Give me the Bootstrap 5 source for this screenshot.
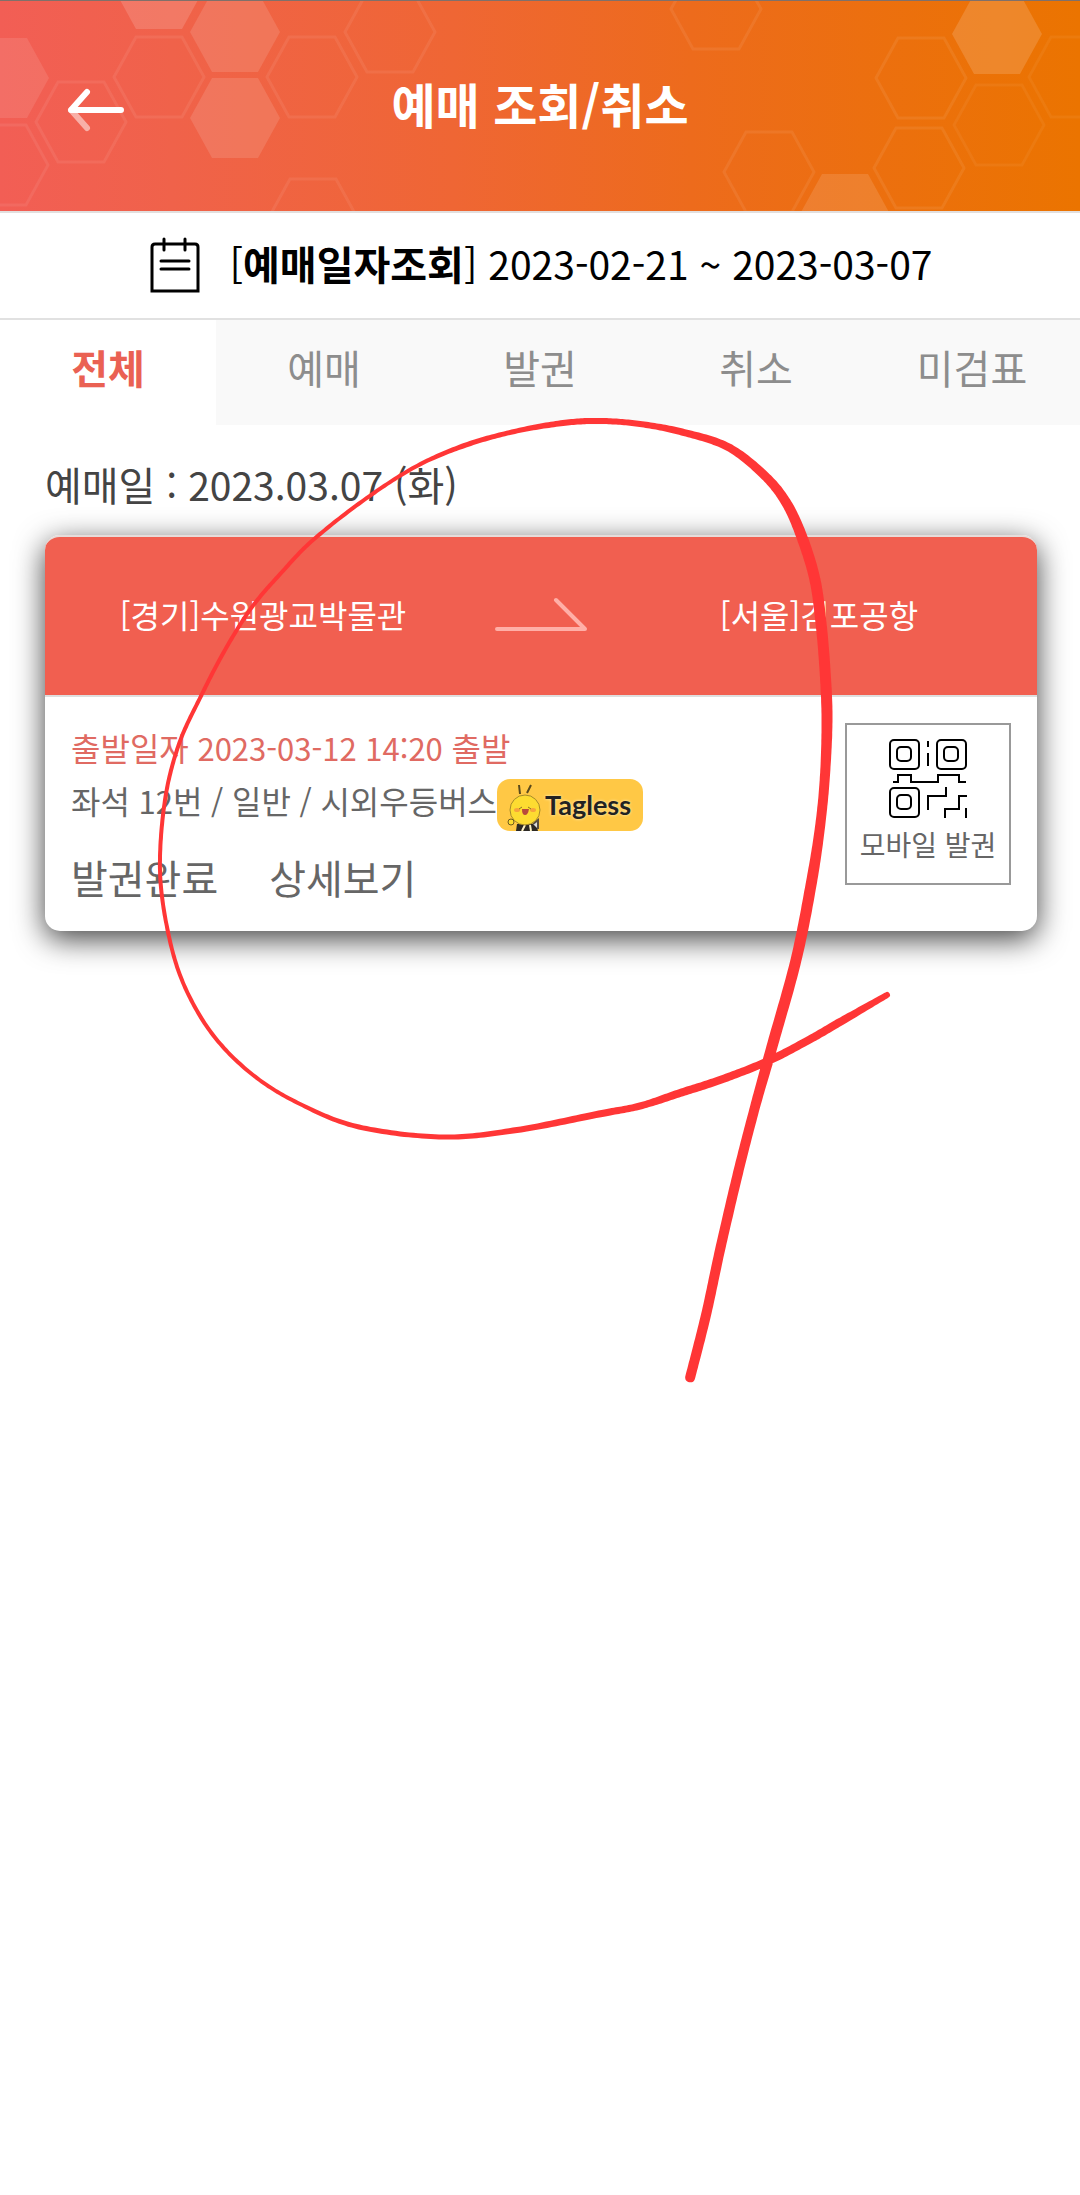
<!DOCTYPE html>
<html lang="ko">
<head>
<meta charset="utf-8">
<meta name="viewport" content="width=device-width, initial-scale=1">
<title>예매 조회/취소</title>
<link href="https://cdn.jsdelivr.net/npm/bootstrap@5.3.0/dist/css/bootstrap.min.css" rel="stylesheet">
<style>
  body { font-family: "Noto Sans CJK KR", "Noto Sans", sans-serif; color: #000; background: #fff; }
  button { color: inherit; font-family: inherit; }
  .app-header { height: 213px; padding-bottom: 6px; border-top: 1px solid #80706a; border-bottom: 2px solid #e2dfde;
    background: linear-gradient(90deg, #f25e55 0, #f0624a 16%, #ef6634 42%, #ed6b1c 64%, #eb7400 100%); }
  .honeycomb { inset: 0; }
  .back-btn { left: 60px; top: 76px; width: 72px; height: 64px; }
  .app-title { font-size: 48px; line-height: 72px; }
  .date-bar { gap: 28px; padding: 19px 0 24px; border-bottom: 2px solid #e1e1e1; font-size: 40px; line-height: 60px; }
  .date-bar svg { margin-top: 4px; }
  .lg-num { font-size: 39px; line-height: 1; }
  .sm-num { font-size: 31px; line-height: 1; }
  .status-tabs { background: #f9f9f9; }
  .status-tabs .nav-link { padding: 17px 0 28px; border-radius: 0; font-size: 40px; line-height: 60px; color: #8d8d8d; }
  .status-tabs .nav-link.active { background: #fff; color: #ea6153; font-weight: 700; }
  .content { padding: 29px 43px 60px 45px; }
  .day-title { margin: 0 0 21px; font-size: 40px; line-height: 60px; color: #444; font-weight: 400; }
  .ticket { border: 0; border-radius: 15px; box-shadow: 0 8px 30px rgba(0, 0, 0, .75); }
  .ticket-route { padding: 53px 0 57px; border-top: 2px solid #e6dcda; border-bottom: 2px solid #dedede;
    border-radius: 15px 15px 0 0; background: #f15f50; color: #fff; font-size: 32px; line-height: 48px; }
  .route-arrow { width: 120px; }
  .ticket-info { padding: 26px 26px 24px; font-size: 32px; line-height: 48px; color: #666; }
  .depart { color: #e06a62; }
  .seat-row { margin-top: 5px; }
  .tagless { width: 146px; height: 52px; margin-top: 3px; border-radius: 13px; background: #ffc845; color: #222;
    font: 700 27px/52px Lato, sans-serif; text-shadow: 0 0 3px #fff3c8; }
  .actions { margin-top: 16px; gap: 51px; font-size: 40px; line-height: 60px; }
  .qr-btn { width: 166px; height: 162px; padding-top: 13px; border: 2px solid #999; font-size: 28px; line-height: 42px; color: #666; }
  .qr-btn svg { margin-bottom: 4px; }
  .pen-layer { top: 0; left: 0; pointer-events: none; z-index: 10; }
</style>
<script src="https://cdn.jsdelivr.net/npm/bootstrap@5.3.0/dist/js/bootstrap.bundle.min.js"></script>
</head>
<body class="position-relative min-vh-100">

<header class="app-header position-relative d-flex align-items-center justify-content-center">
  <svg class="honeycomb position-absolute w-100 h-100" viewBox="0 1 1080 210" preserveAspectRatio="xMidYMid slice" aria-hidden="true">
    <defs><path id="hex" d="M-45 0L-23-40H23L45 0L23 40H-23Z"/></defs>
    <g fill="#fff">
      <use href="#hex" x="4" y="78" fill-opacity=".1"/>
      <use href="#hex" x="159" y="-11" fill-opacity=".15"/>
      <use href="#hex" x="235" y="32" fill-opacity=".12"/>
      <use href="#hex" x="235" y="118" fill-opacity=".12"/>
      <use href="#hex" x="997" y="34" fill-opacity=".15"/>
      <use href="#hex" x="845" y="214" fill-opacity=".12"/>
    </g>
    <g fill="none" stroke="#fff" stroke-width="3" stroke-opacity=".07">
      <use href="#hex" x="159" y="77"/>
      <use href="#hex" x="312" y="77"/>
      <use href="#hex" x="390" y="32"/>
      <use href="#hex" x="81" y="122"/>
      <use href="#hex" x="3" y="165"/>
      <use href="#hex" x="313" y="219"/>
      <use href="#hex" x="716" y="9"/>
      <use href="#hex" x="921" y="78"/>
      <use href="#hex" x="999" y="125" stroke-opacity=".05"/>
      <use href="#hex" x="1074" y="77" stroke-opacity=".05"/>
      <use href="#hex" x="769" y="172"/>
      <use href="#hex" x="919" y="168"/>
    </g>
  </svg>
  <button type="button" class="back-btn btn p-0 border-0 position-absolute" aria-label="뒤로">
    <svg class="d-block" width="72" height="64" viewBox="0 0 72 64" fill="none" stroke="#fff" stroke-width="6" stroke-linecap="round" stroke-linejoin="round" aria-hidden="true">
      <path d="M11 33L27 51" stroke-opacity=".5"/>
      <path d="M61 33H11L27 15"/>
    </svg>
  </button>
  <h1 class="app-title position-relative m-0 fw-bold text-white">예매 조회/취소</h1>
</header>

<button type="button" class="date-bar w-100 bg-white border-top-0 border-start-0 border-end-0 d-flex justify-content-center align-items-center">
  <svg width="54" height="58" viewBox="0 0 54 58" fill="none" stroke="#000" stroke-width="3" stroke-linecap="round" aria-hidden="true">
    <path d="M4 55V11Q4 8 7 8H47Q50 8 50 11V55Z"/>
    <path d="M16 3V14M37 3V14M13 25H41M13 33H41"/>
  </svg>
  <span>[<b>예매일자조회</b>]<span class="lg-num"> 2023-02-21 ~ 2023-03-07</span></span>
</button>

<nav class="status-tabs nav nav-fill row g-0 row-cols-5 text-center" aria-label="예매 상태">
  <a class="nav-link active col" href="#all" aria-current="page">전체</a>
  <a class="nav-link col" href="#reserved">예매</a>
  <a class="nav-link col" href="#issued">발권</a>
  <a class="nav-link col" href="#cancelled">취소</a>
  <a class="nav-link col" href="#unchecked">미검표</a>
</nav>

<main class="content">
  <h2 class="day-title">예매일<span class="lg-num"> : 2023.03.07 </span>(화)</h2>
  <article class="ticket card">
    <div class="ticket-route d-flex align-items-center text-center">
      <div class="flex-fill w-50">[경기]수원광교박물관</div>
      <div class="route-arrow flex-shrink-0 d-flex justify-content-center">
        <svg width="94" height="36" viewBox="0 0 94 36" fill="none" stroke="#ffafa7" stroke-width="4" stroke-linecap="round" stroke-linejoin="round" aria-hidden="true">
          <path d="M3 33H91L62 4"/>
        </svg>
      </div>
      <div class="flex-fill w-50">[서울]김포공항</div>
    </div>
    <div class="ticket-info d-flex justify-content-between align-items-start">
      <div>
        <div class="depart">출발일자<span class="sm-num"> 2023-03-12 14:20 </span>출발</div>
        <div class="seat-row d-flex align-items-start">
          <span>좌석<span class="sm-num"> 12</span>번<span class="sm-num"> / </span>일반<span class="sm-num"> / </span>시외우등버스</span>
          <span class="tagless d-inline-flex overflow-hidden">
            <svg class="flex-shrink-0" width="48" height="52" viewBox="0 0 48 52" aria-hidden="true">
              <path d="M23 15L22 6M30 14L34 6" stroke="#5a4a1c" stroke-width="2" fill="none"/>
              <path d="M20 45H39L41 52H19Z" fill="#2c2924"/>
              <path d="M25 52L28 46M34 52L33 46" stroke="#fff3c4" stroke-width="2"/>
              <path d="M36 45L41 41V50" stroke="#5a5040" stroke-width="2" fill="#ddd"/>
              <ellipse cx="28" cy="31" rx="15" ry="15" fill="#fddc31" stroke="#a58a2a" stroke-width="1"/>
              <ellipse cx="20" cy="31" rx="3" ry="2" fill="#f7a43c"/>
              <ellipse cx="36" cy="31" rx="3" ry="2" fill="#f7a43c"/>
              <path d="M22 30l3-2M31 28l3 2" stroke="#8a7424" stroke-width="1"/>
              <path d="M25 30H32Q31 36 28 36T25 30Z" fill="#b84a3c"/>
              <circle cx="14" cy="43" r="3" fill="#fddc31" stroke="#6b5a20" stroke-width="1"/>
            </svg>Tagless</span>
        </div>
        <div class="actions d-flex">
          <span>발권완료</span>
          <a href="#detail" class="text-reset text-decoration-none">상세보기</a>
        </div>
      </div>
      <button type="button" class="qr-btn bg-white d-flex flex-column align-items-center px-0 pb-0">
        <svg class="flex-shrink-0" width="80" height="81" viewBox="0 0 80 81" fill="none" stroke="#000" stroke-width="2" aria-hidden="true">
          <rect x="2" y="2" width="29" height="29" rx="4"/>
          <rect x="9" y="9" width="14" height="14" rx="4"/>
          <rect x="49" y="2" width="29" height="29" rx="4"/>
          <rect x="56" y="9" width="14" height="14" rx="4"/>
          <rect x="2" y="50" width="29" height="29" rx="4"/>
          <rect x="9" y="57" width="14" height="14" rx="4"/>
          <path d="M40 3V9M40 15V28M5 44H10V37H23V44H50V37H71V44H78M40 72V58H58V49M57 80V71H71V58H79M78 70V80"/>
        </svg>
        모바일 발권
      </button>
    </div>
  </article>
</main>

<svg class="pen-layer position-absolute w-100" viewBox="0 0 1080 1400" aria-hidden="true"><path id="pen" fill="#ff3636"/></svg>
<script>
  // Pen stroke: x, y and nib width at each sampled point, smoothed into one filled outline.
  const pts = [[887,995,6],[840,1022,8],[807,1041,8],[766,1062,8],[720,1080,8],[680,1093,8],[640,1106,7],[599,1114,7],[517,1130,6],[443,1137,5],
    [359,1127,5],[300,1104,4],[253,1075,4],[213,1035,4],[184,985,4],[168,932,4],[160,870,4],[165,800,4],[179,744,4],[201,696,4],[225,650,4],[252,607,4],[282,572,4],[313,540,4],[364,500,4],[415,467,4],
    [463,446,5],[512,432,5],[563,423,6],[601,421,6],[640,424,6],[682,432,7],[728,447,8],[765,476,9],[787,504,10],[803,540,11],[815,580,11],[821,623,11],[825,670,11],
    [827,719,11],[825,775,10],[820,827,10],[811,885,11],[796,960,11],[773,1043,11],[755,1107,10],[738,1173,10],[720,1250,10],[706,1315,10],[690,1378,10]];
  const line = [];
  for (let i = 0; i < pts.length - 1; i++) {
    const a = pts[Math.max(i - 1, 0)], b = pts[i], c = pts[i + 1], d = pts[Math.min(i + 2, pts.length - 1)];
    for (let t = 0; t < 1; t += 0.05)
      line.push(b.map((_, k) => 0.5 * (2 * b[k] + (c[k] - a[k]) * t + (2 * a[k] - 5 * b[k] + 4 * c[k] - d[k]) * t * t + (3 * b[k] - a[k] - 3 * c[k] + d[k]) * t * t * t)));
  }
  line.push(pts[pts.length - 1]);
  const left = [], right = [];
  line.forEach((p, i) => {
    const q = line[Math.max(i - 1, 0)], r = line[Math.min(i + 1, line.length - 1)];
    const dx = r[0] - q[0], dy = r[1] - q[1], n = Math.hypot(dx, dy) || 1, h = p[2] / 2;
    left.push([p[0] - dy / n * h, p[1] + dx / n * h]);
    right.unshift([p[0] + dy / n * h, p[1] - dx / n * h]);
  });
  const f = p => p[0].toFixed(1) + ' ' + p[1].toFixed(1);
  document.getElementById('pen').setAttribute('d',
    'M' + left.map(f).join('L') + 'A5 5 0 0 0 ' + right.map(f).join('L') + 'A3 3 0 0 0 ' + f(left[0]) + 'Z');
</script>
</body>
</html>
